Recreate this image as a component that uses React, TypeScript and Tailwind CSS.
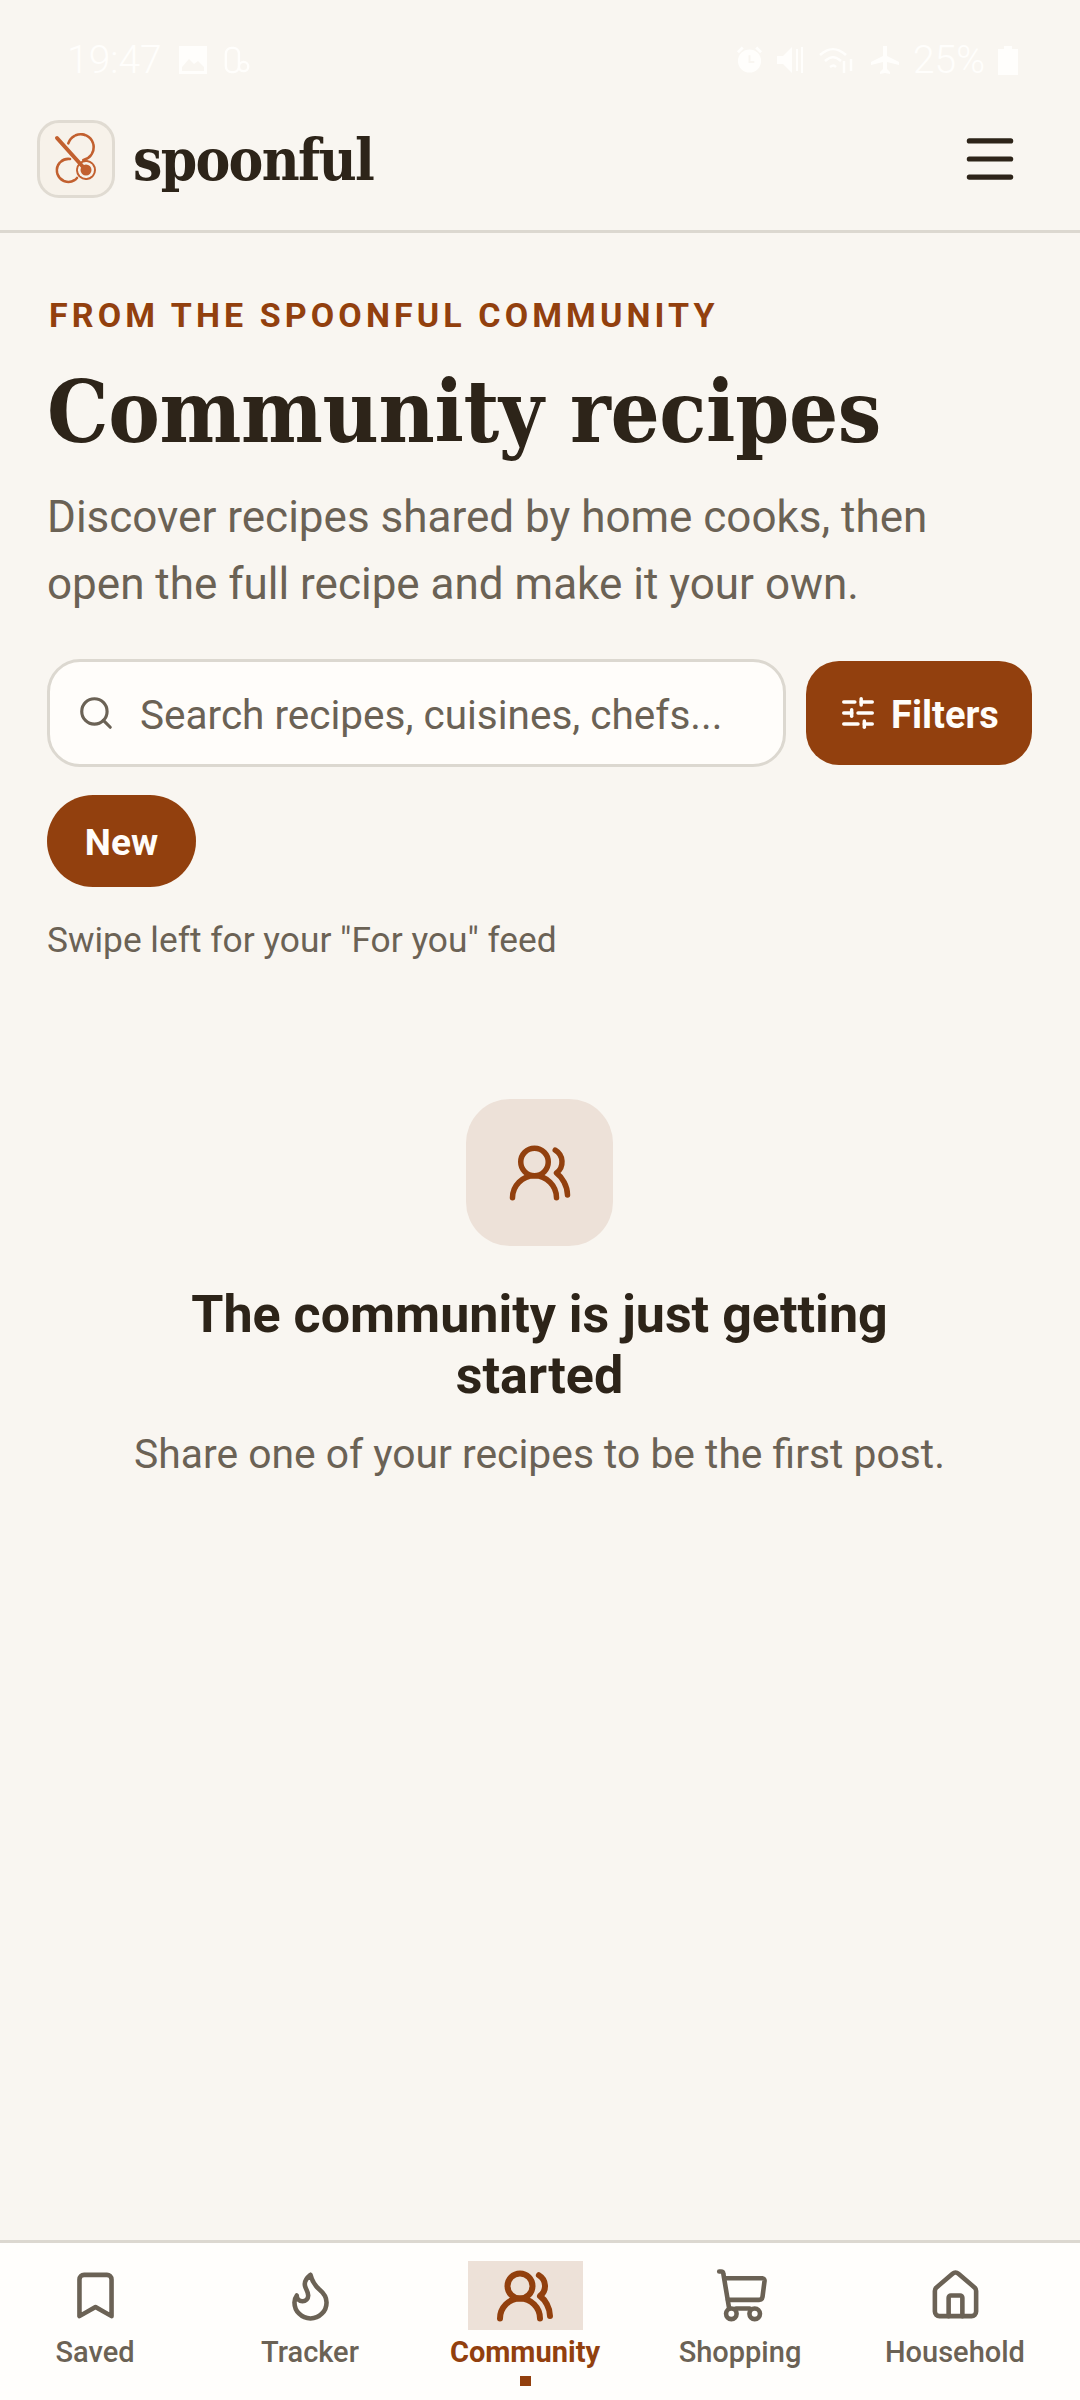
import type { ReactNode } from "react";
import { Bookmark, Flame, House, Menu, Search, SlidersHorizontal, UsersRound } from "lucide-react";

function Logo() {
  return (
    <svg viewBox="3 3 72 72" className="w-[72px] h-[72px]" fill="none" stroke="#c2602f" strokeWidth="2.6" strokeLinecap="round">
      <path d="M31.3 23.3 A13 13 0 1 1 46.3 40" strokeDasharray="10 1.2" />
      <path d="M33 39 A11.5 11.5 0 1 0 40 58" strokeDasharray="10 1.2" />
      <path d="M20 18 L47 48" strokeWidth="4" />
      <circle cx="49" cy="50" r="5.5" fill="#c2602f" stroke="none" />
      <circle cx="49" cy="50" r="9" strokeWidth="2" strokeDasharray="6 1.2" />
    </svg>
  );
}

function Cart() {
  return (
    <svg viewBox="0 0 24 24" className="w-[55px] h-[55px]" fill="none" stroke="currentColor" strokeWidth="2" strokeLinecap="round" strokeLinejoin="round">
      <path d="M2.7 1.5h.8a1 1 0 0 1 1 .9L7 17.4" />
      <path d="M5 4.5h16.5a1 1 0 0 1 1 1.1l-.9 7a1.5 1.5 0 0 1-1.5 1.3H6.5" />
      <path d="M10 17.7h6" />
      <circle cx="8" cy="20" r="2.3" />
      <circle cx="18.2" cy="20" r="2.3" />
    </svg>
  );
}

function StatusBar() {
  return (
    <div className="h-[100px] flex items-start justify-between pl-[67px] pr-[62px] pt-[42px] text-[#fffefc]">
      <div className="flex items-center gap-[16px]">
        <span className="text-[39px] leading-[36px] font-light">19:47</span>
        <svg viewBox="0 0 30 30" className="w-[30px] h-[30px]" fill="currentColor"><path d="M1 1h28v28H1zM4 22l7-8 5 5 4-3 6 6v4H4z" fillRule="evenodd" /></svg>
        <svg viewBox="0 0 30 30" className="w-[28px] h-[30px]" fill="none" stroke="currentColor" strokeWidth="2.5"><rect x="2" y="2" width="14" height="26" rx="6" /><circle cx="21" cy="22" r="5" /></svg>
      </div>
      <div className="flex items-center gap-[13px]">
        <svg viewBox="0 0 28 30" className="w-[27px] h-[30px]" fill="currentColor"><path d="M1 6l5-5 2 2-5 5zM27 6l-5-5-2 2 5 5z" /><path fillRule="evenodd" d="M14 4a12 12 0 1 1 0 24 12 12 0 0 1 0-24zm-1 6v8h6v-2h-4v-6z" /></svg>
        <svg viewBox="0 0 30 30" className="w-[30px] h-[30px]" fill="currentColor"><path d="M1 11h6l9-9v26l-9-9H1z" /><path d="M21 4v22M26 2v26" stroke="currentColor" strokeWidth="2" /></svg>
        <svg viewBox="0 0 38 30" className="w-[38px] h-[30px]" fill="none" stroke="currentColor" strokeWidth="2.5"><path d="M1 10c9-8 17-8 26 0M6 16c6-5 10-5 16 0M11 22c3-2 4-2 6 0M25 16v12M32 14v12" /></svg>
        <svg viewBox="0 0 30 30" className="w-[30px] h-[30px]" fill="currentColor"><path d="M13 1h4v10l12 6v3l-12-3v7l3 3v2l-5-1-5 1v-2l3-3v-7L1 20v-3l12-6z" /></svg>
        <span className="text-[39px] leading-[36px] font-light">25%</span>
        <svg viewBox="0 0 20 30" className="w-[20px] h-[30px]" fill="currentColor"><path d="M6 1h8v3h6v26H0V4h6z" /></svg>
      </div>
    </div>
  );
}

function NavItem({ icon, label, active }: { icon: ReactNode; label: string; active?: boolean }) {
  return (
    <div className={`w-[190px] flex flex-col items-center ${active ? "text-[#92400e]" : "text-[#6b6255]"}`}>
      <div className={`w-[115px] h-[69px] flex items-center justify-center ${active ? "bg-[#ede1d8]" : ""}`}>{icon}</div>
      <span className={`mt-[4px] text-[29px] leading-[36px] ${active ? "font-bold" : "font-medium"}`}>{label}</span>
      {active && <span className="mt-[6px] w-[11px] h-[10px] bg-[#92400e]" />}
    </div>
  );
}

export default function App() {
  return (
    <div className="w-[1080px] h-[2400px] flex flex-col bg-[#f9f6f1] font-['Roboto',sans-serif] text-[#2d2419]">
      <StatusBar />
      <header className="h-[133px] shrink-0 flex items-center justify-between pl-[37px] pr-[59px] pb-[12px] border-b-[3px] border-[#dcd8d0]">
        <div className="flex items-center gap-[18px]">
          <div className="w-[78px] h-[78px] rounded-[22px] border-[3px] border-[#e0dbd2] bg-[#f7f2ea] flex items-center justify-center overflow-hidden">
            <Logo />
          </div>
          <span className="pt-[2px] font-['DejaVu_Serif_Condensed','DejaVu_Serif',serif] font-bold text-[58px] leading-[68px] tracking-[-1.7px]">spoonful</span>
        </div>
        <Menu size={62} strokeWidth={2} color="#2d2419" />
      </header>

      <main className="flex-1 flex flex-col pl-[47px] pr-[48px] pt-[60px]">
        <p className="pl-[2px] text-[34px] leading-[44px] font-bold tracking-[4.1px] text-[#92400e]">FROM THE SPOONFUL COMMUNITY</p>
        <h1 className="mt-[25px] font-['DejaVu_Serif_Condensed','DejaVu_Serif',serif] font-bold text-[86px] leading-[100px] tracking-[-0.35px]">Community recipes</h1>
        <p className="mt-[22px] text-[44px] leading-[67px] text-[#6b6255]">
          Discover recipes shared by home cooks, then
          <br />
          open the full recipe and make it your own.
        </p>
        <div className="mt-[41px] flex items-center gap-[20px]">
          <div className="w-[739px] h-[108px] rounded-[33px] border-[3px] border-[#dcd8d0] bg-[#fffdfa] flex items-center pl-[27px] gap-[25px] text-[#6b6255]">
            <Search size={38} strokeWidth={2} />
            <span className="pt-[3px] text-[40.5px] leading-[52px]">Search recipes, cuisines, chefs...</span>
          </div>
          <div className="w-[226px] h-[104px] rounded-[33px] bg-[#92400e] flex items-center justify-center gap-[14px] text-[#fffdfa]">
            <SlidersHorizontal size={38} strokeWidth={2.2} />
            <span className="pt-[3px] text-[38px] leading-[48px] font-bold">Filters</span>
          </div>
        </div>
        <div className="mt-[28px] pt-[3px] w-[149px] h-[92px] rounded-full bg-[#92400e] flex items-center justify-center text-[#fffdfa] text-[37px] font-bold">New</div>
        <p className="mt-[31px] text-[35.3px] leading-[44px] text-[#6b6255]">Swipe left for your "For you" feed</p>

        <div className="mt-[137px] flex flex-col items-center text-center">
          <div className="w-[147px] h-[147px] rounded-[44px] bg-[#ede1d8] flex items-center justify-center text-[#92400e]">
            <UsersRound size={66} strokeWidth={2} />
          </div>
          <h2 className="mt-[38px] w-[760px] text-[52px] leading-[61px] font-bold">The community is just getting started</h2>
          <p className="mt-[20px] text-[40.8px] leading-[56px] text-[#6b6255]">Share one of your recipes to be the first post.</p>
        </div>
      </main>

      <nav className="h-[160px] shrink-0 bg-[#fffefc] border-t-[3px] border-[#dcd8d0] pt-[18px] flex gap-[25px]">
        <NavItem label="Saved" icon={<Bookmark size={55} strokeWidth={2} />} />
        <NavItem label="Tracker" icon={<Flame size={55} strokeWidth={2} />} />
        <NavItem label="Community" active icon={<UsersRound size={60} strokeWidth={2.4} />} />
        <NavItem label="Shopping" icon={<Cart />} />
        <NavItem label="Household" icon={<House size={55} strokeWidth={2} />} />
      </nav>
    </div>
  );
}
